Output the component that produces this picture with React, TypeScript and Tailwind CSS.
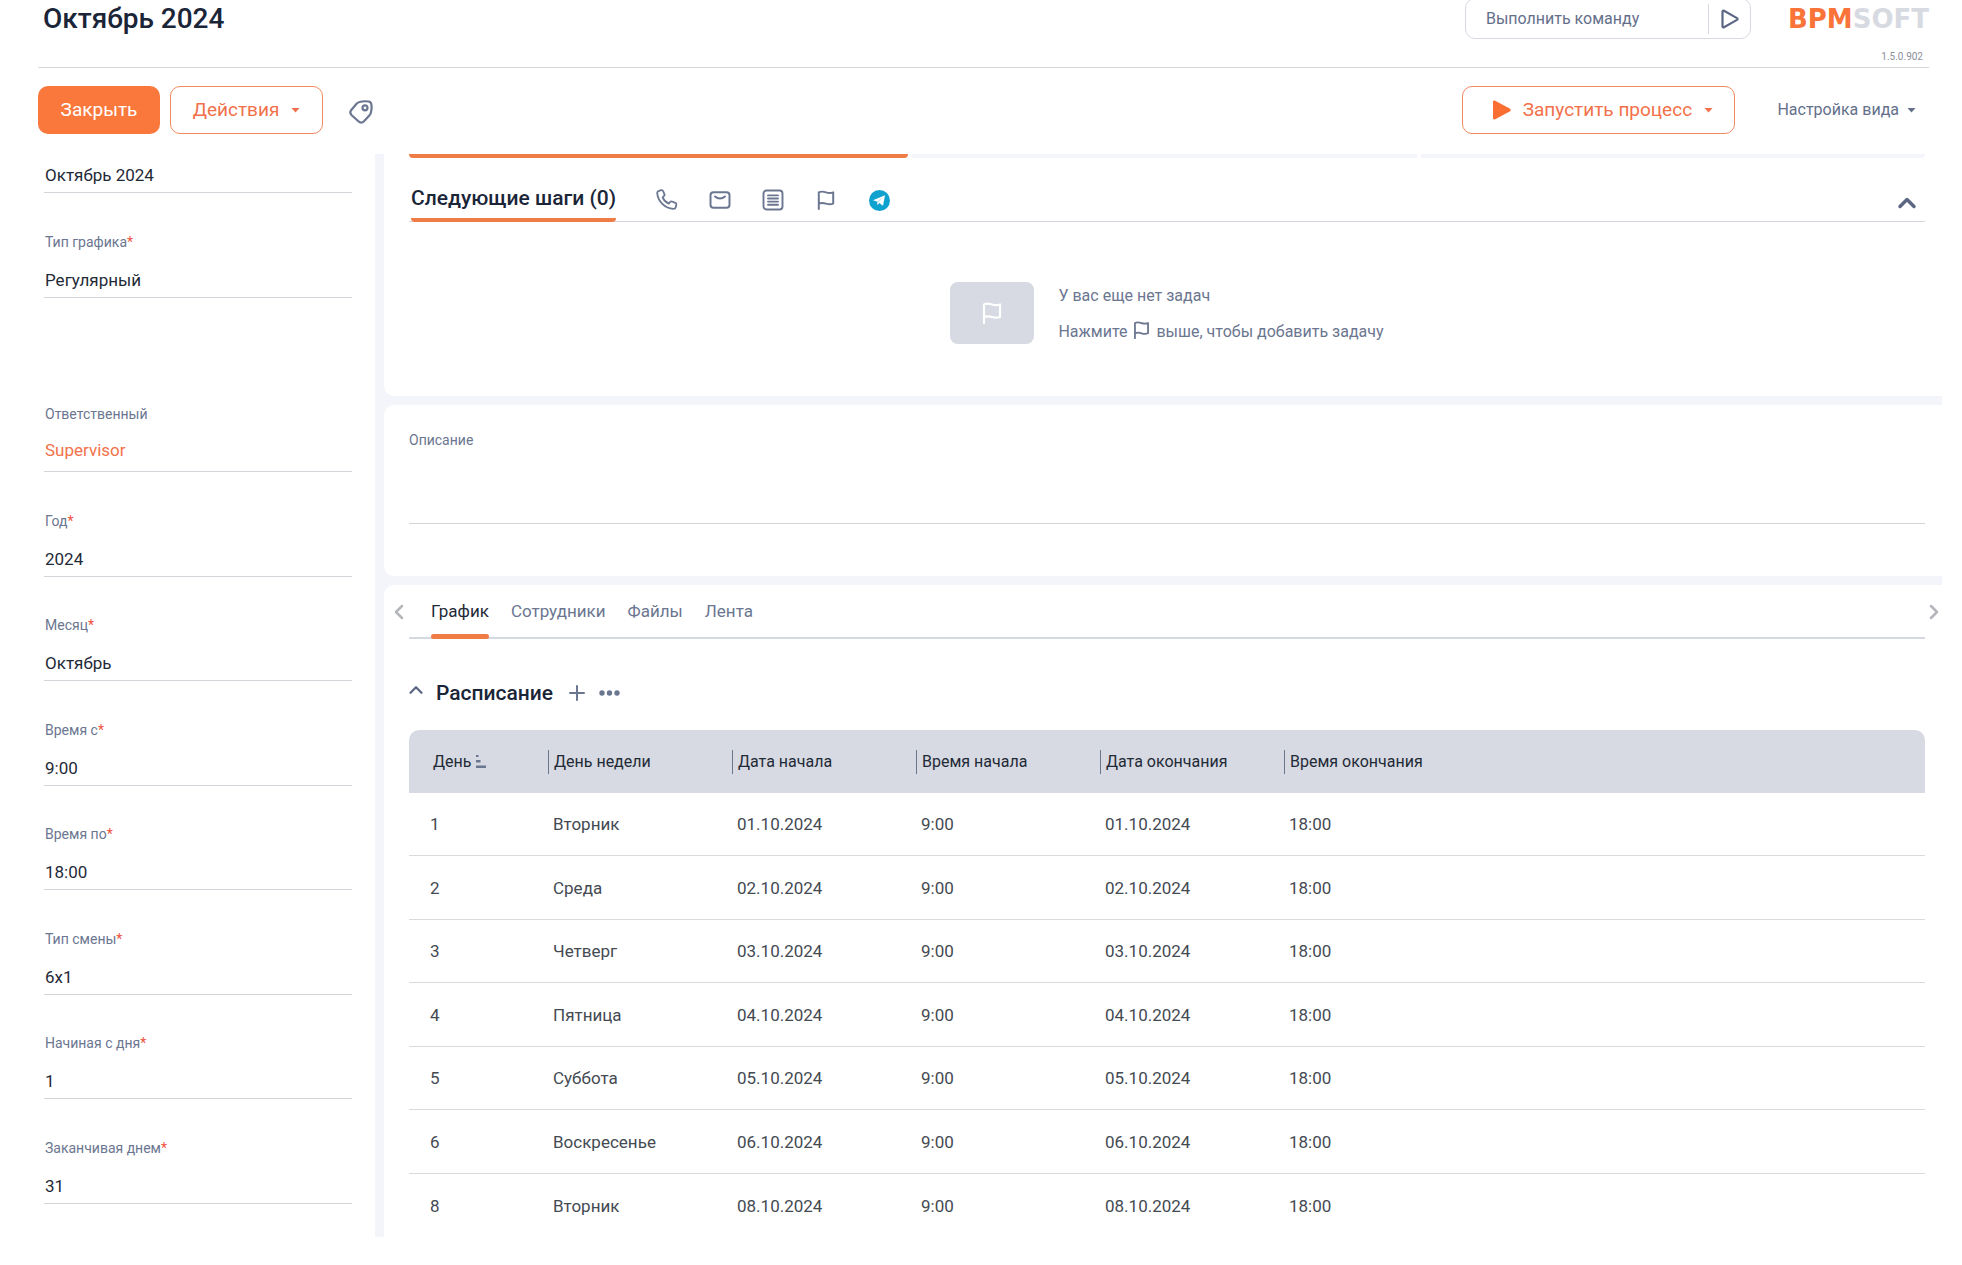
import React, { useState } from 'react';
import { ChevronLeft, ChevronRight, ChevronUp, Plus } from 'lucide-react';

interface FieldProps {
    id: string;
    label: string;
    value: string;
}

const fields: FieldProps[] = [
    { id: 'year', label: 'Год', value: '2024' },
    { id: 'month', label: 'Месяц', value: 'Октябрь' },
    { id: 'timeFrom', label: 'Время с', value: '9:00' },
    { id: 'timeTo', label: 'Время по', value: '18:00' },
    { id: 'shiftType', label: 'Тип смены', value: '6x1' },
    { id: 'dayFrom', label: 'Начиная с дня', value: '1' },
    { id: 'dayTo', label: 'Заканчивая днем', value: '31' },
];

const tabs = ['График', 'Сотрудники', 'Файлы', 'Лента'];

const columns = ['День', 'День недели', 'Дата начала', 'Время начала', 'Дата окончания', 'Время окончания'];

const rows = [
    { day: 1, weekday: 'Вторник', date: '01.10.2024' },
    { day: 2, weekday: 'Среда', date: '02.10.2024' },
    { day: 3, weekday: 'Четверг', date: '03.10.2024' },
    { day: 4, weekday: 'Пятница', date: '04.10.2024' },
    { day: 5, weekday: 'Суббота', date: '05.10.2024' },
    { day: 6, weekday: 'Воскресенье', date: '06.10.2024' },
    { day: 8, weekday: 'Вторник', date: '08.10.2024' },
];

const Caret = () => (
    <svg width="9" height="5" viewBox="0 0 9 5" fill="currentColor" aria-hidden="true">
        <path d="M0.5 0h8L4.5 4.5z" />
    </svg>
);

const FlagIcon = ({ className }: { className: string }) => (
    <svg className={className} viewBox="0 0 20 22" fill="none" stroke="currentColor" strokeWidth="2.2" strokeLinecap="round" strokeLinejoin="round" aria-hidden="true">
        <path d="M2 21V2.5c3-1.500 5-1 8 0s5 1 8 0V15c-3 1.200-5 .9-8 0s-5-1.200-8 0" />
    </svg>
);

const PhoneIcon = () => (
    <svg width="22" height="22" viewBox="0 0 22 22" fill="none" stroke="currentColor" strokeWidth="1.8" strokeLinejoin="round" aria-hidden="true">
        <path d="M3 1.800 5.200 1.200c1-.2 1.700.2 2 1l1.200 3c.3.8.1 1.400-.5 1.900L6.600 8.300c1.100 2.800 3.300 5 6.200 6.300l1.300-1.600c.5-.6 1.200-.8 1.900-.5l3.300 1.400c.8.3 1.200 1 1 1.900l-.6 2.400c-.3 1.100-1.200 1.800-2.300 1.700C9 19.500 2.300 12.800 1.200 4.300 1.100 3 1.800 2.100 3 1.800Z" />
    </svg>
);

const MailIcon = () => (
    <svg width="22" height="18" viewBox="0 0 22 18" fill="none" stroke="currentColor" strokeWidth="2" strokeLinecap="round" strokeLinejoin="round" aria-hidden="true">
        <rect x="1.5" y="1.2" width="19" height="15.6" rx="3" />
        <path d="M6 5.500c3.300 2.600 6.700 2.600 10 0" />
    </svg>
);

const ListIcon = () => (
    <svg width="22" height="22" viewBox="0 0 22 22" fill="none" stroke="currentColor" strokeWidth="1.9" strokeLinecap="round" aria-hidden="true">
        <rect x="1.5" y="1.5" width="19" height="19" rx="3" />
        <path d="M6 6.400h10M6 9.500h10M6 12.600h10M6 15.700h10" />
    </svg>
);

const TelegramIcon = () => (
    <svg width="21" height="21" viewBox="0 0 21 21" aria-hidden="true">
        <circle cx="10.5" cy="10.5" r="10.5" fill="#0fa2cf" />
        <path d="M4 10.300 16 5.300l-2 10.400-3.700-2.600-1.900 2-.4-3.500z" fill="#fff" />
        <path d="m8 11.600 5.500-4-4.300 5.100-.8 2.400z" fill="#b9dfee" />
    </svg>
);

const TagIcon = () => (
    <svg width="24" height="24" viewBox="0 0 24 24" fill="none" stroke="currentColor" strokeWidth="2.2" strokeLinejoin="round" aria-hidden="true">
        <path d="M10.500 2c3-.8 6-.9 9-.5 1.600.2 2.500 1 2.800 2.600.5 3 .4 6-.5 8.900-.3 1-.8 1.800-1.500 2.500L15 21.300c-1.800 1.800-3.800 1.800-5.600 0l-6.700-6.100c-1.800-1.800-1.800-3.700-.2-5.500L7.800 3.500c.8-.8 1.700-1.300 2.700-1.500Z" />
        <circle cx="16" cy="7.8" r="2.5" />
    </svg>
);

const SortIcon = () => (
    <svg width="11" height="13" viewBox="0 0 11 13" fill="#6b7690" aria-hidden="true">
        <path d="M1 0h2.500v2H1zM1 5h4.500v2.500H1zM1 10.500h10V13H1z" />
    </svg>
);

const Field = ({ id, label, value }: FieldProps) => (
    <div className="flex h-[104px] flex-col justify-end odd:h-[105px]">
        <label htmlFor={id} className="mb-[11px] pl-px text-sm text-[#6b7690]">
            {label}
            <span className="text-[#ee5340]">*</span>
        </label>
        <input
            id={id}
            defaultValue={value}
            className="h-[35px] w-full border-b border-[#d3d5da] bg-transparent pl-px text-[17px] text-[#1f2a37] outline-none"
        />
    </div>
);

const Header = () => (
    <header className="mr-[33px] ml-[38px] flex h-[68px] items-start justify-between border-b border-[#d5d8dd]">
        <h1 className="pl-[5px] text-[28px] leading-[38px] font-medium text-[#1b2538]">Октябрь 2024</h1>
        <div className="flex items-start gap-[37px]">
            <form className="-mt-0.5 flex h-[41px] w-[286px] items-center rounded-[10px] border border-[#d8dae2]">
                <input
                    aria-label="Выполнить команду"
                    placeholder="Выполнить команду"
                    className="h-full min-w-0 flex-1 pl-5 text-base text-[#64708a] outline-none placeholder:text-[#64708a]"
                />
                <button type="button" aria-label="Выполнить" className="flex h-[30px] w-[42px] items-center border-l border-[#d8dae2] pl-3 text-[#5c6883]">
                    <svg width="18" height="20" viewBox="0 0 18 20" fill="none" stroke="currentColor" strokeWidth="2.2" strokeLinejoin="round" aria-hidden="true">
                        <path d="M1.500 2.500v15c0 .8.8 1.200 1.500.8l13-7.400c.8-.5.800-1.300 0-1.800L3 1.700c-.7-.4-1.500 0-1.500.8Z" />
                    </svg>
                </button>
            </form>
            <div className="flex flex-col items-end">
                <div className="flex h-[38px] items-center font-['DejaVu_Sans',sans-serif] text-[26px] font-bold">
                    <span className="text-[#fa7339]">BPM</span>
                    <span className="text-[#d8dae2]">SOFT</span>
                </div>
                <span className="mt-[11px] mr-1.5 text-[10px] leading-4 text-[#8b8f99]">1.5.0.902</span>
            </div>
        </div>
    </header>
);

const Toolbar = () => (
    <div className="mr-[46px] ml-[38px] flex h-[86px] items-center justify-between pb-0.5">
        <div className="flex items-center">
            <button className="h-12 w-[122px] rounded-[10px] bg-[#fb783d] text-[19px] text-white">Закрыть</button>
            <button className="ml-2.5 flex h-12 w-[153px] items-center justify-center gap-3 rounded-[10px] border border-[#f08a5f] text-[19px] text-[#f2714a]">
                Действия
                <Caret />
            </button>
            <button aria-label="Теги" className="ml-[26px] pt-1 text-[#6b7690]">
                <TagIcon />
            </button>
        </div>
        <div className="flex items-center gap-[42px]">
            <button className="flex h-12 w-[273px] items-center justify-center gap-3 rounded-[10px] border border-[#f08a5f] pl-2 text-[19px] text-[#f2714a]">
                <svg width="18" height="20" viewBox="0 0 18 20" fill="#fb6f33" aria-hidden="true">
                    <path d="M0 2v16c0 1.300 1 1.800 2.200 1.200l14.500-7.600c1.300-.7 1.300-2.500 0-3.200L2.200.8C1 .2 0 .7 0 2Z" />
                </svg>
                Запустить процесс
                <Caret />
            </button>
            <button className="flex items-center gap-2 text-base text-[#64708a]">
                Настройка вида
                <Caret />
            </button>
        </div>
    </div>
);

const Sidebar = () => (
    <aside className="w-[375px] shrink-0 pt-1 pr-[23px] pl-[44px]">
        <input
            aria-label="Название"
            defaultValue="Октябрь 2024"
            className="h-[35px] w-full border-b border-[#d3d5da] pl-px text-[17px] text-[#1f2a37] outline-none"
        />
        <div>
            <Field id="scheduleType" label="Тип графика" value="Регулярный" />
        </div>
        <div className="flex h-[174px] flex-col justify-end">
            <span className="mb-[7px] pl-px text-sm text-[#6b7690]">Ответственный</span>
            <a href="#supervisor" className="h-[41px] border-b border-[#d3d5da] pl-px text-[17px] leading-[38px] text-[#f2714a]">
                Supervisor
            </a>
        </div>
        <div>
            {fields.map((item) => (
                <Field key={item.id} {...item} />
            ))}
        </div>
    </aside>
);

const NextSteps = () => (
    <section className="h-[242px] rounded-bl-[10px] bg-white pr-[17px] pl-[25px]">
        <div className="flex h-1 gap-1">
            <div className="w-[499px] rounded-b bg-[#ef7b45]" />
            <div className="flex-1 bg-[#f4f5fa]" />
            <div className="flex-1 rounded-br bg-[#f4f5fa]" />
        </div>
        <div className="flex h-16 items-end justify-between border-b border-[#d5d8e0]">
            <div className="flex items-end">
                <h2 className="-mb-px ml-0.5 rounded-b-sm border-b-4 border-[#ef7b45] pb-1 text-[21px] leading-8 font-medium text-[#1b2538]">
                    Следующие шаги (0)
                </h2>
                <div className="mb-2.5 ml-10 flex h-[22px] items-center gap-[31px] text-[#6b7690] [&>button]:flex [&>button]:w-[22px] [&>button]:justify-center">
                    <button aria-label="Звонок"><PhoneIcon /></button>
                    <button aria-label="Письмо"><MailIcon /></button>
                    <button aria-label="Сообщение"><ListIcon /></button>
                    <button aria-label="Задача"><FlagIcon className="h-5 w-[18px]" /></button>
                    <button aria-label="Telegram"><TelegramIcon /></button>
                </div>
            </div>
            <button aria-label="Свернуть" className="mr-1 mb-1 text-[#5c6883]">
                <ChevronUp className="h-7 w-7" strokeWidth={3} />
            </button>
        </div>
        <div className="mt-[54px] flex items-center justify-center gap-6">
            <div className="flex h-[62px] w-[84px] items-center justify-center rounded-lg bg-[#d7dae2] text-white">
                <FlagIcon className="h-[22px] w-5" />
            </div>
            <div className="pt-0.5 text-base leading-9 text-[#6b7690]">
                <p>У вас еще нет задач</p>
                <p className="flex items-center gap-1.5">
                    Нажмите
                    <FlagIcon className="mb-1 h-[18px] w-[17px]" />
                    выше, чтобы добавить задачу
                </p>
            </div>
        </div>
    </section>
);

const Description = () => (
    <section className="flex h-[171px] flex-col rounded-l-[10px] bg-white pt-[25px] pr-[17px] pl-[25px]">
        <label htmlFor="description" className="text-sm text-[#6b7690]">
            Описание
        </label>
        <textarea id="description" className="h-[74px] w-full resize-none border-b border-[#d3d5da] text-[17px] outline-none" />
    </section>
);

const Schedule = () => {
    const [activeTab, setActiveTab] = useState('График');

    return (
        <section className="rounded-tl-[10px] bg-white">
            <div className="flex h-[54px] items-stretch">
                <button aria-label="Назад" className="flex w-[25px] items-center justify-center pl-1 text-[#b4b6bb]">
                    <ChevronLeft className="h-6 w-6 shrink-0" strokeWidth={2.5} />
                </button>
                <div className="flex flex-1 gap-[22px] border-b-2 border-[#d5d8e0] pl-[22px]">
                    {tabs.map((tab) => (
                        <button
                            key={tab}
                            onClick={() => setActiveTab(tab)}
                            className={
                                tab === activeTab
                                    ? '-mb-0.5 flex flex-col justify-between pt-[14px] text-[17px] leading-6 text-[#1f2a37]'
                                    : 'flex items-start pt-[14px] text-[17px] leading-6 text-[#6b7690]'
                            }
                        >
                            {tab}
                            {tab === activeTab && <span className="h-[5px] w-full rounded bg-[#ef7b45]" />}
                        </button>
                    ))}
                </div>
                <button aria-label="Вперед" className="flex w-[17px] items-center justify-center text-[#b4b6bb]">
                    <ChevronRight className="h-6 w-6 shrink-0" strokeWidth={2.5} />
                </button>
            </div>
            <div className="pr-[17px] pl-[25px]">
                <div className="flex h-[91px] items-center pt-4">
                    <button aria-label="Свернуть раздел" className="text-[#5c6883]">
                        <ChevronUp className="mb-1.5 -ml-1 h-[22px] w-[22px]" strokeWidth={2.5} />
                    </button>
                    <h2 className="ml-[9px] text-[21px] leading-8 font-medium text-[#1b2538]">Расписание</h2>
                    <button aria-label="Добавить" className="ml-3 text-[#6b7690]">
                        <Plus className="h-6 w-6" strokeWidth={2} />
                    </button>
                    <button aria-label="Еще" className="ml-[10px] text-[#6b7690]">
                        <svg width="21" height="6" viewBox="0 0 21 6" fill="currentColor" aria-hidden="true">
                            <circle cx="3" cy="3" r="2.7" />
                            <circle cx="10.5" cy="3" r="2.7" />
                            <circle cx="18" cy="3" r="2.7" />
                        </svg>
                    </button>
                </div>
                <table className="w-full table-fixed border-separate border-spacing-0 text-left">
                    <colgroup>
                        <col className="w-[139px]" />
                        <col className="w-[184px]" />
                        <col className="w-[184px]" />
                        <col className="w-[184px]" />
                        <col className="w-[184px]" />
                        <col />
                    </colgroup>
                    <thead>
                        <tr className="h-[63px]">
                            {columns.map((column, index) => (
                                <th
                                    key={column}
                                    className="bg-[#d7dae2] p-0 text-base font-normal text-[#1f2a37] first:rounded-tl-[10px] first:pl-6 last:rounded-tr-[10px]"
                                >
                                    {index === 0 ? (
                                        <span className="flex items-center gap-1">
                                            {column}
                                            <SortIcon />
                                        </span>
                                    ) : (
                                        <span className="block border-l border-[#6b7690] pl-[5px] leading-6">{column}</span>
                                    )}
                                </th>
                            ))}
                        </tr>
                    </thead>
                    <tbody>
                        {rows.map((row) => (
                            <tr
                                key={row.day}
                                className="h-16 text-[17px] text-[#444a52] odd:h-[63px] [&>td]:border-b [&>td]:border-[#d8dade] [&>td]:p-0 [&>td]:pt-0.5 [&>td]:pl-[5px] last:[&>td]:border-b-0"
                            >
                                <td><span className="pl-4">{row.day}</span></td>
                                <td>{row.weekday}</td>
                                <td>{row.date}</td>
                                <td>9:00</td>
                                <td>{row.date}</td>
                                <td>18:00</td>
                            </tr>
                        ))}
                    </tbody>
                </table>
            </div>
        </section>
    );
};

const App = () => {
    return (
        <div className="min-h-screen bg-white font-[Roboto,'Liberation_Sans',sans-serif]">
            <Header />
            <Toolbar />
            <div className="mr-5 flex items-stretch">
                <Sidebar />
                <main className="flex min-w-0 flex-1 flex-col gap-[9px] bg-[#f4f5fa] pl-[9px]">
                    <NextSteps />
                    <Description />
                    <Schedule />
                </main>
            </div>
        </div>
    );
};
export default App;
